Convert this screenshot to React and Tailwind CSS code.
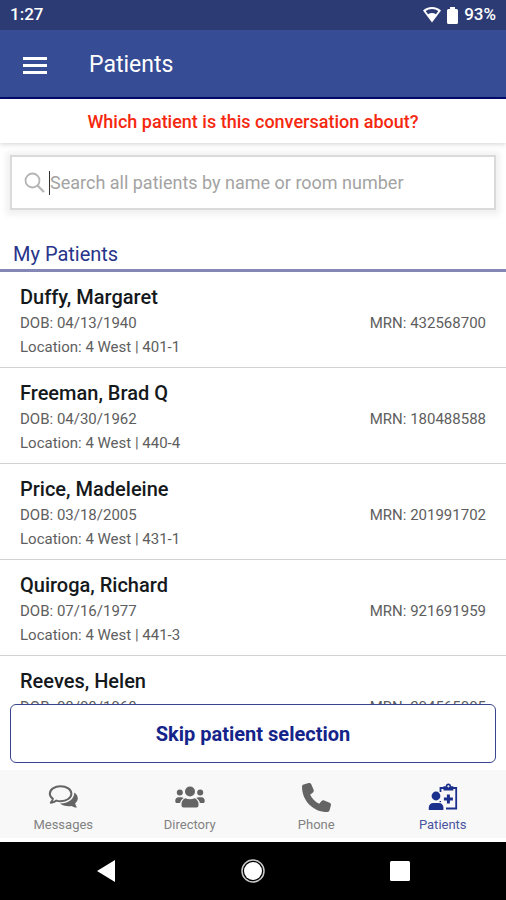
import React, { useState } from 'react';
import { FaPhone } from 'react-icons/fa6';

const PATIENTS = [
  { name: 'Duffy, Margaret', dob: '04/13/1940', location: '4 West | 401-1', mrn: '432568700' },
  { name: 'Freeman, Brad Q', dob: '04/30/1962', location: '4 West | 440-4', mrn: '180488588' },
  { name: 'Price, Madeleine', dob: '03/18/2005', location: '4 West | 431-1', mrn: '201991702' },
  { name: 'Quiroga, Richard', dob: '07/16/1977', location: '4 West | 441-3', mrn: '921691959' },
  { name: 'Reeves, Helen', dob: '08/08/1968', location: '4 West | 442-1', mrn: '204565005' },
];

const MessagesIcon = () => (
  <svg width="30" height="24" viewBox="0 0 30 24" fill="none">
    <path d="M26.4 7.400c2.200 1.500 3.400 3.600 3.400 5.900 0 1.900-1 3.700-2.600 5 .2 1.500.8 2.900 1.800 4.300-2 0-3.700-.6-5.100-1.700-4.400.8-9.300-.1-11.800-2.500 8.300-.2 14-4.200 14.300-11z" fill="currentColor" />
    <path d="M12.600 1.200c6 0 10.800 3.300 10.800 7.500s-4.800 7.500-10.800 7.500c-1.500 0-2.900-.2-4.200-.6-1.500 1.400-3.300 2.200-5.600 2.200 1.200-1.300 1.900-2.600 2-4.200C3 12.300 1.800 10.600 1.800 8.700c0-4.200 4.800-7.500 10.800-7.500z" stroke="currentColor" strokeWidth="2" strokeLinejoin="round" />
  </svg>
);

const DirectoryIcon = () => (
  <svg width="30" height="22" viewBox="0 0 30 22" fill="currentColor">
    <circle cx="15" cy="5.500" r="5" />
    <circle cx="4.800" cy="6.500" r="3" />
    <circle cx="25.200" cy="6.500" r="3" />
    <path d="M10.500 12.200c1.300.7 2.800 1.100 4.500 1.100s3.200-.4 4.500-1.100c2.400.8 4 3 4 5.600v1.700c0 1.100-.9 2-2 2h-13c-1.100 0-2-.9-2-2v-1.700c0-2.600 1.600-4.800 4-5.600z" />
    <path d="M3.500 11.200h2.800c1 0 1.800.3 2.400.9-2 1.200-3.200 2.900-3.600 4.900H1.800c-.9 0-1.500-.6-1.500-1.500v-1.100c0-1.800 1.400-3.200 3.200-3.200z" />
    <path d="M26.500 11.200h-2.800c-1 0-1.800.3-2.400.9 2 1.200 3.200 2.900 3.600 4.900h3.300c.9 0 1.500-.6 1.500-1.500v-1.100c0-1.800-1.400-3.200-3.200-3.200z" />
  </svg>
);

const PatientsIcon = () => (
  <svg width="30" height="28" viewBox="0 0 30 28" fill="none">
    <path d="M12.500 9V5h15.700v20.500H18" stroke="currentColor" strokeWidth="1.800" />
    <path d="M15.500 3.200h2.300a2.600 2.600 0 0 1 5.200 0h2.300v4.300h-9.800z" fill="currentColor" />
    <circle cx="20.400" cy="3.300" r="1.100" fill="#f8f8f8" />
    <path d="M18.900 11.500h3v3h3v3h-3v3h-3v-3h-3v-3h3z" fill="currentColor" />
    <circle cx="8" cy="13" r="4.400" fill="currentColor" />
    <path d="M.8 27v-2.500c0-2.700 1.900-4.500 4.500-4.500h5.600c2.600 0 4.500 1.800 4.500 4.500V27z" fill="currentColor" />
    <path d="M12.300 18v1.200" stroke="currentColor" strokeWidth="1.500" />
  </svg>
);

const TABS = [
  { label: 'Messages', icon: <MessagesIcon /> },
  { label: 'Directory', icon: <DirectoryIcon /> },
  { label: 'Phone', icon: <FaPhone size={29} /> },
  { label: 'Patients', icon: <PatientsIcon /> },
];

export default function App() {
  const [query, setQuery] = useState('');
  const [activeTab, setActiveTab] = useState('Patients');

  const visible = PATIENTS.filter(p => p.name.toLowerCase().includes(query.toLowerCase()));

  return (
    <div className="h-screen w-full flex flex-col bg-white font-[Roboto,sans-serif] overflow-hidden">
      {/* STATUS BAR */}
      <div className="h-[30px] shrink-0 flex items-center justify-between px-2.5 bg-[#2c3b74] text-white text-[17px] font-medium">
        <span>1:27</span>
        <div className="flex items-center gap-1.5">
          <svg width="18" height="16" viewBox="0 0 18 16">
            <path d="M9 0C5.400 0 2.300 1.300 0 3.400L9 15.500l9-12.100C15.700 1.300 12.600 0 9 0z" fill="white" />
            <path d="M2.700 4.100C4.500 2.800 6.600 2.100 9 2.100s4.500.7 6.300 2l-2.400 3.200C11.700 6.500 10.400 6.100 9 6.100s-2.700.4-3.900 1.200z" fill="#2c3b74" />
          </svg>
          <svg width="11" height="17" viewBox="0 0 11 17" fill="white">
            <path d="M3 0h5v2h1.500A1.500 1.500 0 0 1 11 3.500v12A1.500 1.500 0 0 1 9.500 17h-8A1.500 1.500 0 0 1 0 15.500v-12A1.500 1.500 0 0 1 1.500 2H3z" />
          </svg>
          <span>93%</span>
        </div>
      </div>

      {/* HEADER */}
      <header className="h-[69px] shrink-0 flex items-center gap-[42px] pt-1 pl-[23px] bg-[#364c94] border-b-2 border-[#020a6e] text-white">
        <button aria-label="Menu" className="flex flex-col gap-1">
          <span className="w-6 h-[3px] bg-white" />
          <span className="w-6 h-[3px] bg-white" />
          <span className="w-6 h-[3px] bg-white" />
        </button>
        <h1 className="text-[23px]">Patients</h1>
      </header>

      <p className="h-11 shrink-0 flex items-center justify-center text-[18px] font-medium text-[#f5280f] shadow-[0_1px_5px_rgba(0,0,0,0.18)]">
        Which patient is this conversation about?
      </p>

      {/* SEARCH */}
      <div className="shrink-0 px-2.5 pt-3 pb-5">
        <label className="h-[55px] flex items-center gap-1 pl-3 border-2 border-[#dadada] bg-white shadow-[0_1px_6px_4px_rgba(0,0,0,0.06)]">
          <svg width="21" height="21" viewBox="0 0 21 21" fill="none" stroke="#b5b5b5" strokeWidth="1.800" className="shrink-0">
            <circle cx="8.500" cy="8.500" r="7" />
            <path d="M13.500 13.500l6.500 6.500" strokeWidth="2.200" />
          </svg>
          <input
            autoFocus
            aria-label="Search all patients"
            value={query}
            onChange={e => setQuery(e.target.value)}
            placeholder="Search all patients by name or room number"
            className="flex-1 min-w-0 h-6 border-l border-[#333333] text-[18px] text-[#333333] placeholder:text-[#a3a3a3] caret-transparent outline-none"
          />
        </label>
      </div>

      <h2 className="h-[42px] shrink-0 flex items-center px-[13px] pt-2 border-b-[3px] border-[#8487b5] text-[20px] text-[#26348a]">
        My Patients
      </h2>

      {/* PATIENT LIST */}
      <ul className="flex-1 min-h-0 overflow-y-auto [scrollbar-width:none]">
        {visible.map(p => (
          <li key={p.mrn} className="px-5 pt-[11px] pb-2 border-b border-[#d2d2d2]">
            <h3 className="text-[20px] leading-7 font-medium text-[#15191c]">{p.name}</h3>
            <div className="flex justify-between text-[15px] leading-6 text-[#5e5e5e]">
              <span>DOB: {p.dob}</span>
              <span>MRN: {p.mrn}</span>
            </div>
            <div className="text-[15px] leading-6 text-[#5e5e5e]">Location: {p.location}</div>
          </li>
        ))}
      </ul>

      <div className="shrink-0 px-2.5 pb-[7px]">
        <button className="w-full h-[59px] rounded-md border border-[#39458f] bg-white text-[20px] font-bold text-[#14248a]">
          Skip patient selection
        </button>
      </div>

      {/* TAB BAR */}
      <nav className="h-[72px] shrink-0 grid grid-cols-4 bg-[#f8f8f8] border-b-4 border-white">
        {TABS.map(tab => (
          <button
            key={tab.label}
            onClick={() => setActiveTab(tab.label)}
            className={`flex flex-col items-center pt-3 ${activeTab === tab.label ? 'text-[#1b2f8c]' : 'text-[#646464]'}`}
          >
            <span className="h-[30px] flex items-center">{tab.icon}</span>
            <span className={`text-[13px] leading-[26px] ${activeTab === tab.label ? 'text-[#4a55a0]' : 'text-[#828282]'}`}>{tab.label}</span>
          </button>
        ))}
      </nav>

      {/* SYSTEM NAVIGATION */}
      <div className="h-[58px] shrink-0 flex items-center justify-between px-24 bg-black">
        <button aria-label="Back">
          <svg width="20" height="22" viewBox="0 0 20 22"><path d="M19 0v22L1 11z" fill="white" /></svg>
        </button>
        <button aria-label="Home">
          <svg width="24" height="24" viewBox="0 0 24 24">
            <circle cx="12" cy="12" r="11" fill="none" stroke="#c9c9c9" strokeWidth="1.500" />
            <circle cx="12" cy="12" r="9" fill="white" />
          </svg>
        </button>
        <button aria-label="Recent apps">
          <svg width="20" height="20" viewBox="0 0 20 20"><rect width="20" height="20" rx="1.500" fill="white" /></svg>
        </button>
      </div>
    </div>
  );
}
